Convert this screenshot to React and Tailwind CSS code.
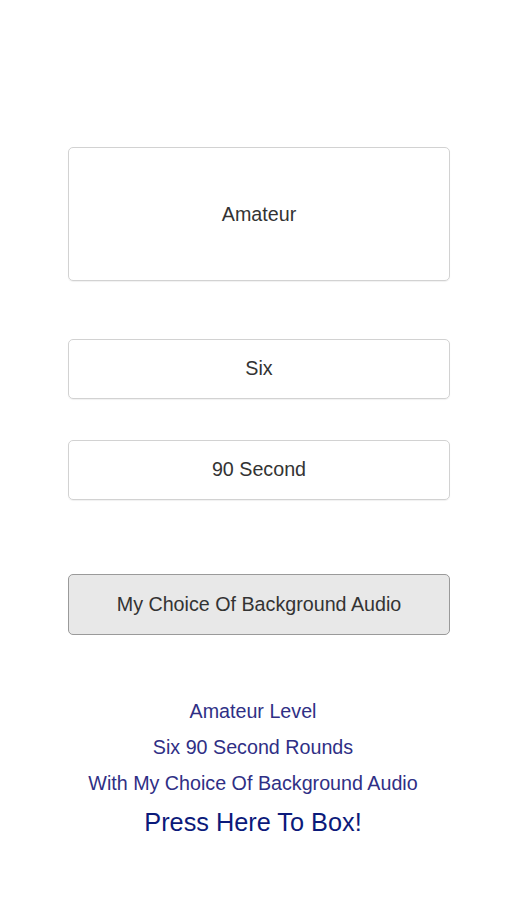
export default function App() {
  const font = { fontFamily: '"Liberation Sans", Arial, sans-serif' };
  return (
    <div className="w-[506px] h-[900px] bg-white overflow-hidden" style={font}>
      <div className="pt-[147px] pl-[68px] pr-[56px] flex flex-col">
        <div className="h-[134px] border border-[#d2d2d2] rounded-[5px] shadow-[0_1px_1px_rgba(0,0,0,0.06)] flex items-center justify-center text-[19.7px] text-[#333] pt-[1px]">
          Amateur
        </div>
        <div className="mt-[58px] h-[60px] border border-[#d2d2d2] rounded-[5px] shadow-[0_1px_1px_rgba(0,0,0,0.06)] flex items-center justify-center text-[19.7px] text-[#333]">
          Six
        </div>
        <div className="mt-[41px] h-[60px] border border-[#d2d2d2] rounded-[5px] shadow-[0_1px_1px_rgba(0,0,0,0.06)] flex items-center justify-center text-[19.7px] text-[#333]">
          90 Second
        </div>
        <div className="mt-[74px] h-[61px] border border-[#9a9a9a] bg-[#e8e8e8] rounded-[5px] flex items-center justify-center text-[19.7px] text-[#333]">
          My Choice Of Background Audio
        </div>
      </div>
      <div className="mt-[58px] flex flex-col items-center text-[19.7px] text-[#2f2f85] leading-[36px]">
        <div>Amateur Level</div>
        <div>Six 90 Second Rounds</div>
        <div>With My Choice Of Background Audio</div>
        <div className="text-[25.3px] text-[#0b1a7a] leading-[40px] mt-[1px]">Press Here To Box!</div>
      </div>
    </div>
  );
}
